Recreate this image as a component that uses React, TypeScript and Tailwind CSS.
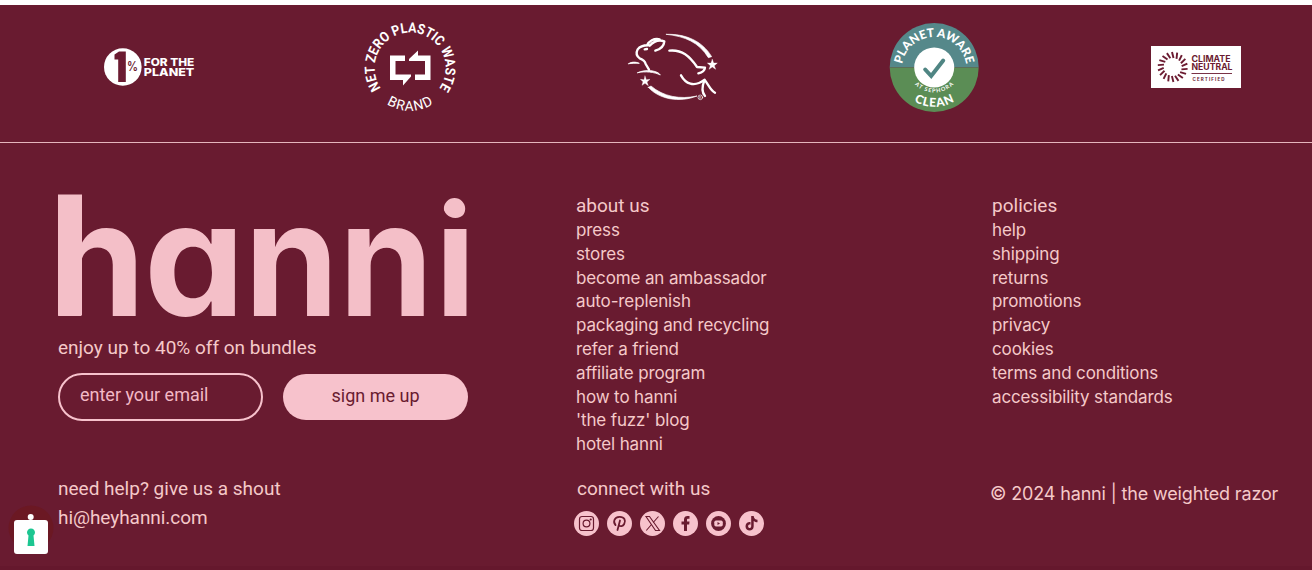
import React from "react";

const aboutLinks = [
  "press",
  "stores",
  "become an ambassador",
  "auto-replenish",
  "packaging and recycling",
  "refer a friend",
  "affiliate program",
  "how to hanni",
  "'the fuzz' blog",
  "hotel hanni",
];

const policyLinks = [
  "help",
  "shipping",
  "returns",
  "promotions",
  "privacy",
  "cookies",
  "terms and conditions",
  "accessibility standards",
];

function OnePercent() {
  return (
    <svg className="h-[40px] w-[92px] shrink-0" viewBox="0 0 92 40">
      <circle cx="18.800" cy="20" r="18.800" fill="#fff" />
      <path d="M10.500 7.500 15 4.500h6.800V35h-7.600V12.500h-3.700z" fill="#6b1b31" />
      <text x="23" y="24" className="font-['Inter'] text-[12.500px] font-semibold" fill="#6b1b31" textLength="11" lengthAdjust="spacingAndGlyphs">%</text>
      <text x="39.800" y="18.700" className="font-['Inter'] text-[10.500px] font-extrabold" fill="#fff" textLength="50.500" lengthAdjust="spacingAndGlyphs">FOR THE</text>
      <text x="39.800" y="28.500" className="font-['Inter'] text-[10.500px] font-extrabold" fill="#fff" textLength="50.500" lengthAdjust="spacingAndGlyphs">PLANET</text>
    </svg>
  );
}

function NetZero() {
  return (
    <svg className="h-[110px] w-[110px] shrink-0" viewBox="0 0 110 110">
      <defs>
        <path id="nz-top" d="M26.300 78A35.500 35.500 0 1 1 82 78" />
        <path id="nz-bottom" d="M23 86A44 44 0 0 0 85 86" />
      </defs>
      <text className="font-['Roboto'] text-[14px] font-bold" fill="#fff" textAnchor="middle">
        <textPath href="#nz-top" startOffset="50%" textLength="154" lengthAdjust="spacingAndGlyphs">NET ZERO PLASTIC WASTE</textPath>
      </text>
      <text className="font-['Roboto'] text-[14px]" fill="#fff" textAnchor="middle">
        <textPath href="#nz-bottom" startOffset="50%" textLength="49">BRAND</textPath>
      </text>
      <path d="M49 43.500H34V68H47V73.500L55 64.500V62.500H39.500V49H49ZM59 68H74.500V43.500H62V38.500L53 47V49H69V62.500H59Z" fill="#fff" />
    </svg>
  );
}

function Bunny() {
  return (
    <svg className="h-[90px] w-[110px] shrink-0" viewBox="3 0 330 270" fill="none" stroke="#fff" strokeWidth="7" strokeLinecap="round" strokeLinejoin="round">
      <path d="M90 76C96 64 110 54 128 58M98 77C110 64 125 58 142 64C141 78 132 87 115 92M98 76C82 75 68 80 62 88C57 98 58 108 68 115C79 119 84 122 86 132L96 149" />
      <path d="M83 88L90 87" />
      <path d="M35 131C45 124 58 126 67 130C55 129 45 130 35 131ZM62 158C85 147 122 151 130 165C112 156 85 153 62 158Z" fill="#fff" strokeWidth="2.500" />
      <path d="M157 92C195 88 218 109 240 141L264 143C263 152 253 158 244 160M192 166C205 190 230 204 263 179C255 199 252 215 264 228M263 180C274 192 279 210 294 218" />
      <path d="M148 43C205 41 255 62 284 110L274 113C246 67 204 49 148 43ZM94 202L102 198C139 230 190 239 240 228C187 249 126 238 94 202Z" fill="#fff" strokeWidth="2" />
      <path d="M286 118L290 129L301 129L292 137L296 148L286 141L276 148L280 137L271 129L282 129ZM84 168L88 179L99 178L90 186L94 197L84 190L75 196L78 185L70 178L81 179Z" fill="#fff" strokeWidth="1" />
      <circle cx="250" cy="232" r="7" strokeWidth="2" />
      <text x="246" y="236" className="font-['Inter'] text-[11px]" fill="#fff" stroke="none">R</text>
    </svg>
  );
}

function PlanetAware() {
  return (
    <svg className="h-[110px] w-[110px] shrink-0" viewBox="-0.7 -0.5 110 110">
      <defs>
        <path id="pa-top" d="M22 57A32.500 32.500 0 1 1 87 57" />
        <path id="pa-at" d="M29.500 64A27.500 27.500 0 0 0 79.500 64" />
        <path id="pa-bottom" d="M20 74.500A40 40 0 0 0 89 74.500" />
      </defs>
      <path d="M10 55A44.500 44.500 0 0 1 99 55Z" fill="#55888a" />
      <path d="M10 55A44.500 44.500 0 0 0 99 55Z" fill="#5b8d55" />
      <circle cx="54.500" cy="55" r="20" fill="#fff" />
      <path d="M45.500 57L51.500 63.500L63.500 48" fill="none" stroke="#4f8583" strokeWidth="4" strokeLinecap="round" />
      <text className="font-['Lato'] text-[12px] font-black" fill="#fff" textAnchor="middle">
        <textPath href="#pa-top" startOffset="50%" textLength="91">PLANET AWARE</textPath>
      </text>
      <text className="font-['Lato'] text-[5.500px] font-bold" fill="#fff" textAnchor="middle">
        <textPath href="#pa-at" startOffset="50%" textLength="43">AT SEPHORA</textPath>
      </text>
      <text className="font-['Lato'] text-[12px] font-black" fill="#fff" textAnchor="middle">
        <textPath href="#pa-bottom" startOffset="50%" textLength="42">CLEAN</textPath>
      </text>
    </svg>
  );
}

const rays = Array.from({ length: 18 }, (_, i) => i * 20);

function ClimateNeutral() {
  return (
    <svg className="h-[42px] w-[90px] shrink-0 bg-white" viewBox="0 0 90 42">
      <g stroke="#6b1b31" strokeWidth="1.900">
        {rays.map((a) => (
          <path key={a} d="M22.500 12 21 6" transform={`rotate(${a} 21.700 21)`} />
        ))}
      </g>
      <text x="40.500" y="15.500" className="font-['Inter'] text-[8.500px] font-bold" fill="#6b1b31" textLength="39" lengthAdjust="spacingAndGlyphs">CLIMATE</text>
      <text x="40.500" y="24" className="font-['Inter'] text-[8.500px] font-bold" fill="#6b1b31" textLength="41" lengthAdjust="spacingAndGlyphs">NEUTRAL</text>
      <path d="M40.500 27.500H81" stroke="#6b1b31" strokeWidth=".9" />
      <text x="41.500" y="34.500" className="font-['Inter'] text-[4.500px] font-bold" fill="#6b1b31" textLength="32">CERTIFIED</text>
    </svg>
  );
}

function Wordmark() {
  return (
    <svg className="h-[126px] w-[412px] shrink-0 overflow-visible" viewBox="0 0 412 126" fill="#f4bfc8" role="img" aria-label="hanni">
      <defs>
        <clipPath id="i-shape">
          <circle cx="396.500" cy="14.700" r="10.700" />
          <rect x="385" y="30" width="26" height="95" />
        </clipPath>
      </defs>
      <rect x="0" y="0.500" width="24" height="121" />
      <g className="font-['Inter'] text-[160px] font-bold [font-feature-settings:'cv11']">
        <text transform="translate(-9.600 121.500) scale(.972 1)">h</text>
        <text transform="translate(86.100 121.500)">a</text>
        <text transform="translate(186.500 121.500) scale(.945 1)">n</text>
        <text transform="translate(281 121.500) scale(.945 1)">n</text>
        <g clipPath="url(#i-shape)">
          <text transform="translate(376.900 121.500) scale(.94 .992)">i</text>
        </g>
      </g>
    </svg>
  );
}

const socials: { name: string; icon: React.ReactNode }[] = [
  {
    name: "Instagram",
    icon: (
      <g fill="none" stroke="#691b30" strokeWidth="1.200">
        <rect x="5.500" y="5.500" width="14" height="14" rx="2.500" />
        <circle cx="12.500" cy="12.500" r="3.400" />
        <circle cx="16.700" cy="8.500" r=".5" />
      </g>
    ),
  },
  {
    name: "Pinterest",
    icon: <path d="M8.500 14C6 11.500 6.800 6 12.500 5.800C17.500 5.600 19 9.500 17.200 13C16 15.500 13.200 15.700 12 14.200M13 9.500 10.500 19" fill="none" stroke="#691b30" strokeWidth="1.800" strokeLinecap="round" />,
  },
  {
    name: "X",
    icon: (
      <g fill="none" stroke="#691b30" strokeWidth="1.100">
        <path d="M6 5.500H9.500L19.500 19.500H15.500Z" />
        <path d="M18.500 5.500 13.200 11.500M11.500 13.500 6.300 19.500" />
      </g>
    ),
  },
  {
    name: "Facebook",
    icon: <path d="M11 20V13.500H8.500V10.500H11V8.500C11 6 12.500 5 14.500 5H16.500V7.800H15.200C14.200 7.800 14 8.200 14 9V10.500H16.500L16.200 13.500H14V20Z" fill="#691b30" />,
  },
  {
    name: "YouTube",
    icon: (
      <g>
        <circle cx="12.500" cy="12.500" r="7.400" fill="#691b30" />
        <rect x="8.300" y="9.500" width="8.500" height="6" rx="1.700" fill="#f7c2cc" />
        <path d="M11.500 11 14 12.500 11.500 14Z" fill="#691b30" />
      </g>
    ),
  },
  {
    name: "TikTok",
    icon: <path d="M12.200 5H14.700C14.900 7.200 16.300 8.600 18.500 8.800V11.300C17 11.300 15.800 10.800 14.700 10V15.200C14.700 21 6.500 21 6.500 15.200C6.500 12.300 9 10.700 11.500 11.100V13.700C10.300 13.300 9.100 14 9.100 15.200C9.100 17.600 12.200 17.600 12.200 15.200Z" fill="#691b30" />,
  },
];

export default function App() {
  return (
    <div className="relative h-[570px] w-[1312px] overflow-hidden border-t-[5px] border-white bg-[#691b30] font-['Inter',sans-serif] text-[#f5c9c9]">
      <section className="flex h-[138px] items-center justify-between border-b border-[#e5b6bd] pr-[71px] pl-[104px]">
        <div className="-mt-[13px] flex w-[90px] justify-start"><OnePercent /></div>
        <div className="-mt-[13px] flex w-[90px] justify-center"><NetZero /></div>
        <div className="-mt-[17px] flex w-[90px] justify-center"><Bunny /></div>
        <div className="-mt-[13px] flex w-[90px] justify-center"><PlanetAware /></div>
        <div className="-mt-[13px] flex w-[90px] justify-center"><ClimateNeutral /></div>
      </section>
      <footer className="flex pl-[58px]">
        <div className="flex w-[518px] flex-col items-start pt-[51px] font-['Roboto',sans-serif] text-[19px]">
          <Wordmark />
          <p className="mt-[14px] leading-[28px]">enjoy up to 40% off on bundles</p>
          <form className="mt-[11px] flex items-center gap-5">
            <input
              className="h-[48px] w-[205px] rounded-full border-2 border-[#f7c2cc] bg-transparent px-5 pb-1.5 text-[18px] placeholder:text-[#f3b9c6]"
              placeholder="enter your email"
            />
            <button type="button" className="h-[46px] w-[185px] rounded-full bg-[#f7c2cc] pb-1 text-[18px] text-[#691b30]">
              sign me up
            </button>
          </form>
          <p className="mt-[53px] leading-[29px]">need help? give us a shout</p>
          <p className="leading-[29px] tracking-[-0.06px]">hi@heyhanni.com</p>
        </div>
        <div className="w-[416px] pt-[49px]">
          <h2 className="font-['Roboto',sans-serif] text-[19px] leading-[27px]">about us</h2>
          <ul className="text-[17px] leading-[23.8px] tracking-[-0.13px]">
            {aboutLinks.map((label) => (
              <li key={label}>{label}</li>
            ))}
          </ul>
          <h2 className="mt-[18px] pl-px font-['Roboto',sans-serif] text-[19px] leading-[28px]">connect with us</h2>
          <div className="mt-[8px] -ml-[2px] flex gap-2">
            {socials.map((s) => (
              <svg key={s.name} className="h-[25px] w-[25px] rounded-full bg-[#f7c2cc]" viewBox="0 0 25 25" aria-label={s.name}>
                {s.icon}
              </svg>
            ))}
          </div>
        </div>
        <div className="pt-[49px]">
          <h2 className="font-['Roboto',sans-serif] text-[19px] leading-[27px]">policies</h2>
          <ul className="text-[17px] leading-[23.8px] tracking-[-0.13px]">
            {policyLinks.map((label) => (
              <li key={label}>{label}</li>
            ))}
          </ul>
          <p className="mt-[71px] -ml-[2px] text-[18px] leading-[28px] tracking-[-0.15px] whitespace-nowrap">© 2024 hanni | the weighted razor</p>
        </div>
      </footer>
      <div className="absolute bottom-0 left-0 h-[4px] w-full bg-[#65182d]" />
      <svg className="absolute top-[499px] left-[8px] h-[56px] w-[46px]" viewBox="0 0 46 56">
        <circle cx="23" cy="24" r="22.500" fill="#6b1823" />
        <rect x="6" y="16" width="34" height="34" rx="3" fill="#fff" />
        <circle cx="22.700" cy="13" r="3" fill="#fff" />
        <path d="M20.500 31.500A4 4 0 1 1 25.500 31.500L26.500 42H19.500Z" fill="#1cc691" />
      </svg>
    </div>
  );
}
